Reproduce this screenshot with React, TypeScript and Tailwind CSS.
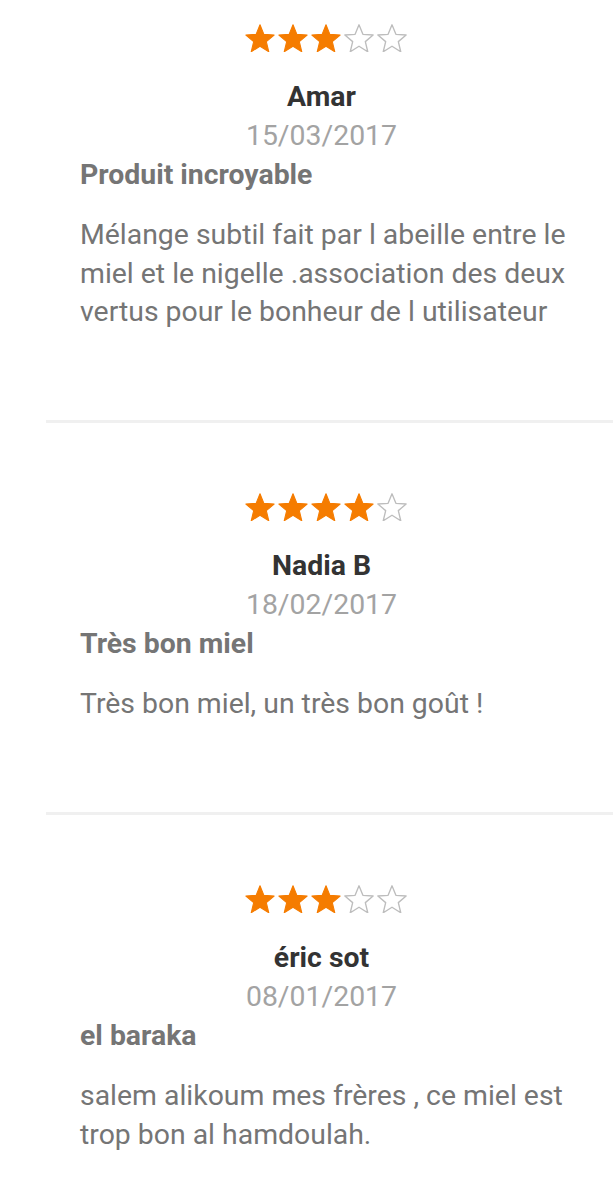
import React from 'react';

type Review = {
  stars: number;
  name: string;
  date: string;
  title: string;
  body: string;
};

const reviews: Review[] = [
  {
    stars: 3,
    name: 'Amar',
    date: '15/03/2017',
    title: 'Produit incroyable',
    body: "Mélange subtil fait par l abeille entre le miel et le nigelle .association des deux vertus pour le bonheur de l utilisateur",
  },
  {
    stars: 4,
    name: 'Nadia B',
    date: '18/02/2017',
    title: 'Très bon miel',
    body: 'Très bon miel, un très bon goût !',
  },
  {
    stars: 3,
    name: 'éric sot',
    date: '08/01/2017',
    title: 'el baraka',
    body: 'salem alikoum mes frères , ce miel est trop bon al hamdoulah.',
  },
];

const Star = ({ filled }: { filled: boolean }) => (
  <svg width="30" height="28" viewBox="1 0.6 22 20.8">
    <polygon
      points="12,1.2 14.9,8.3 22.5,8.8 16.7,13.7 18.5,21.2 12,17.1 5.5,21.2 7.3,13.7 1.5,8.8 9.1,8.3"
      fill={filled ? '#f57c00' : 'none'}
      stroke={filled ? '#f57c00' : '#bdbdbd'}
      strokeWidth={filled ? 0.8 : 1}
      strokeLinejoin="round"
    />
  </svg>
);

const ReviewItem = ({ r, first }: { r: Review; first: boolean }) => (
  <div className={`border-b-[3px] border-[#f0f0f0] pb-[88px] ${first ? 'pt-[24px]' : 'pt-[70px]'}`}>
    <div className="pl-[34px] pr-[20px]">
      <div className="pr-[30px]">
        <div className="flex justify-center gap-[3px] pl-[9px]">
          {[0, 1, 2, 3, 4].map((i) => (
            <Star key={i} filled={i < r.stars} />
          ))}
        </div>
        <div className="mt-[25px] text-center text-[28.4px] leading-[39px] font-bold text-[#333333]">{r.name}</div>
        <div className="text-center text-[28.4px] leading-[39px] text-[#a3a3a3]">{r.date}</div>
      </div>
      <div className="text-[28.4px] leading-[39px] font-bold text-[#757575]">{r.title}</div>
      <div className="mt-[22px] text-[28.4px] leading-[38.7px] text-[#757575]">{r.body}</div>
    </div>
  </div>
);

export default function App() {
  return (
    <div className="min-h-screen bg-white" style={{ fontFamily: 'Roboto, "Noto Sans", sans-serif' }}>
      <div className="ml-[46px]">
        {reviews.map((r, i) => (
          <ReviewItem key={i} r={r} first={i === 0} />
        ))}
      </div>
    </div>
  );
}
